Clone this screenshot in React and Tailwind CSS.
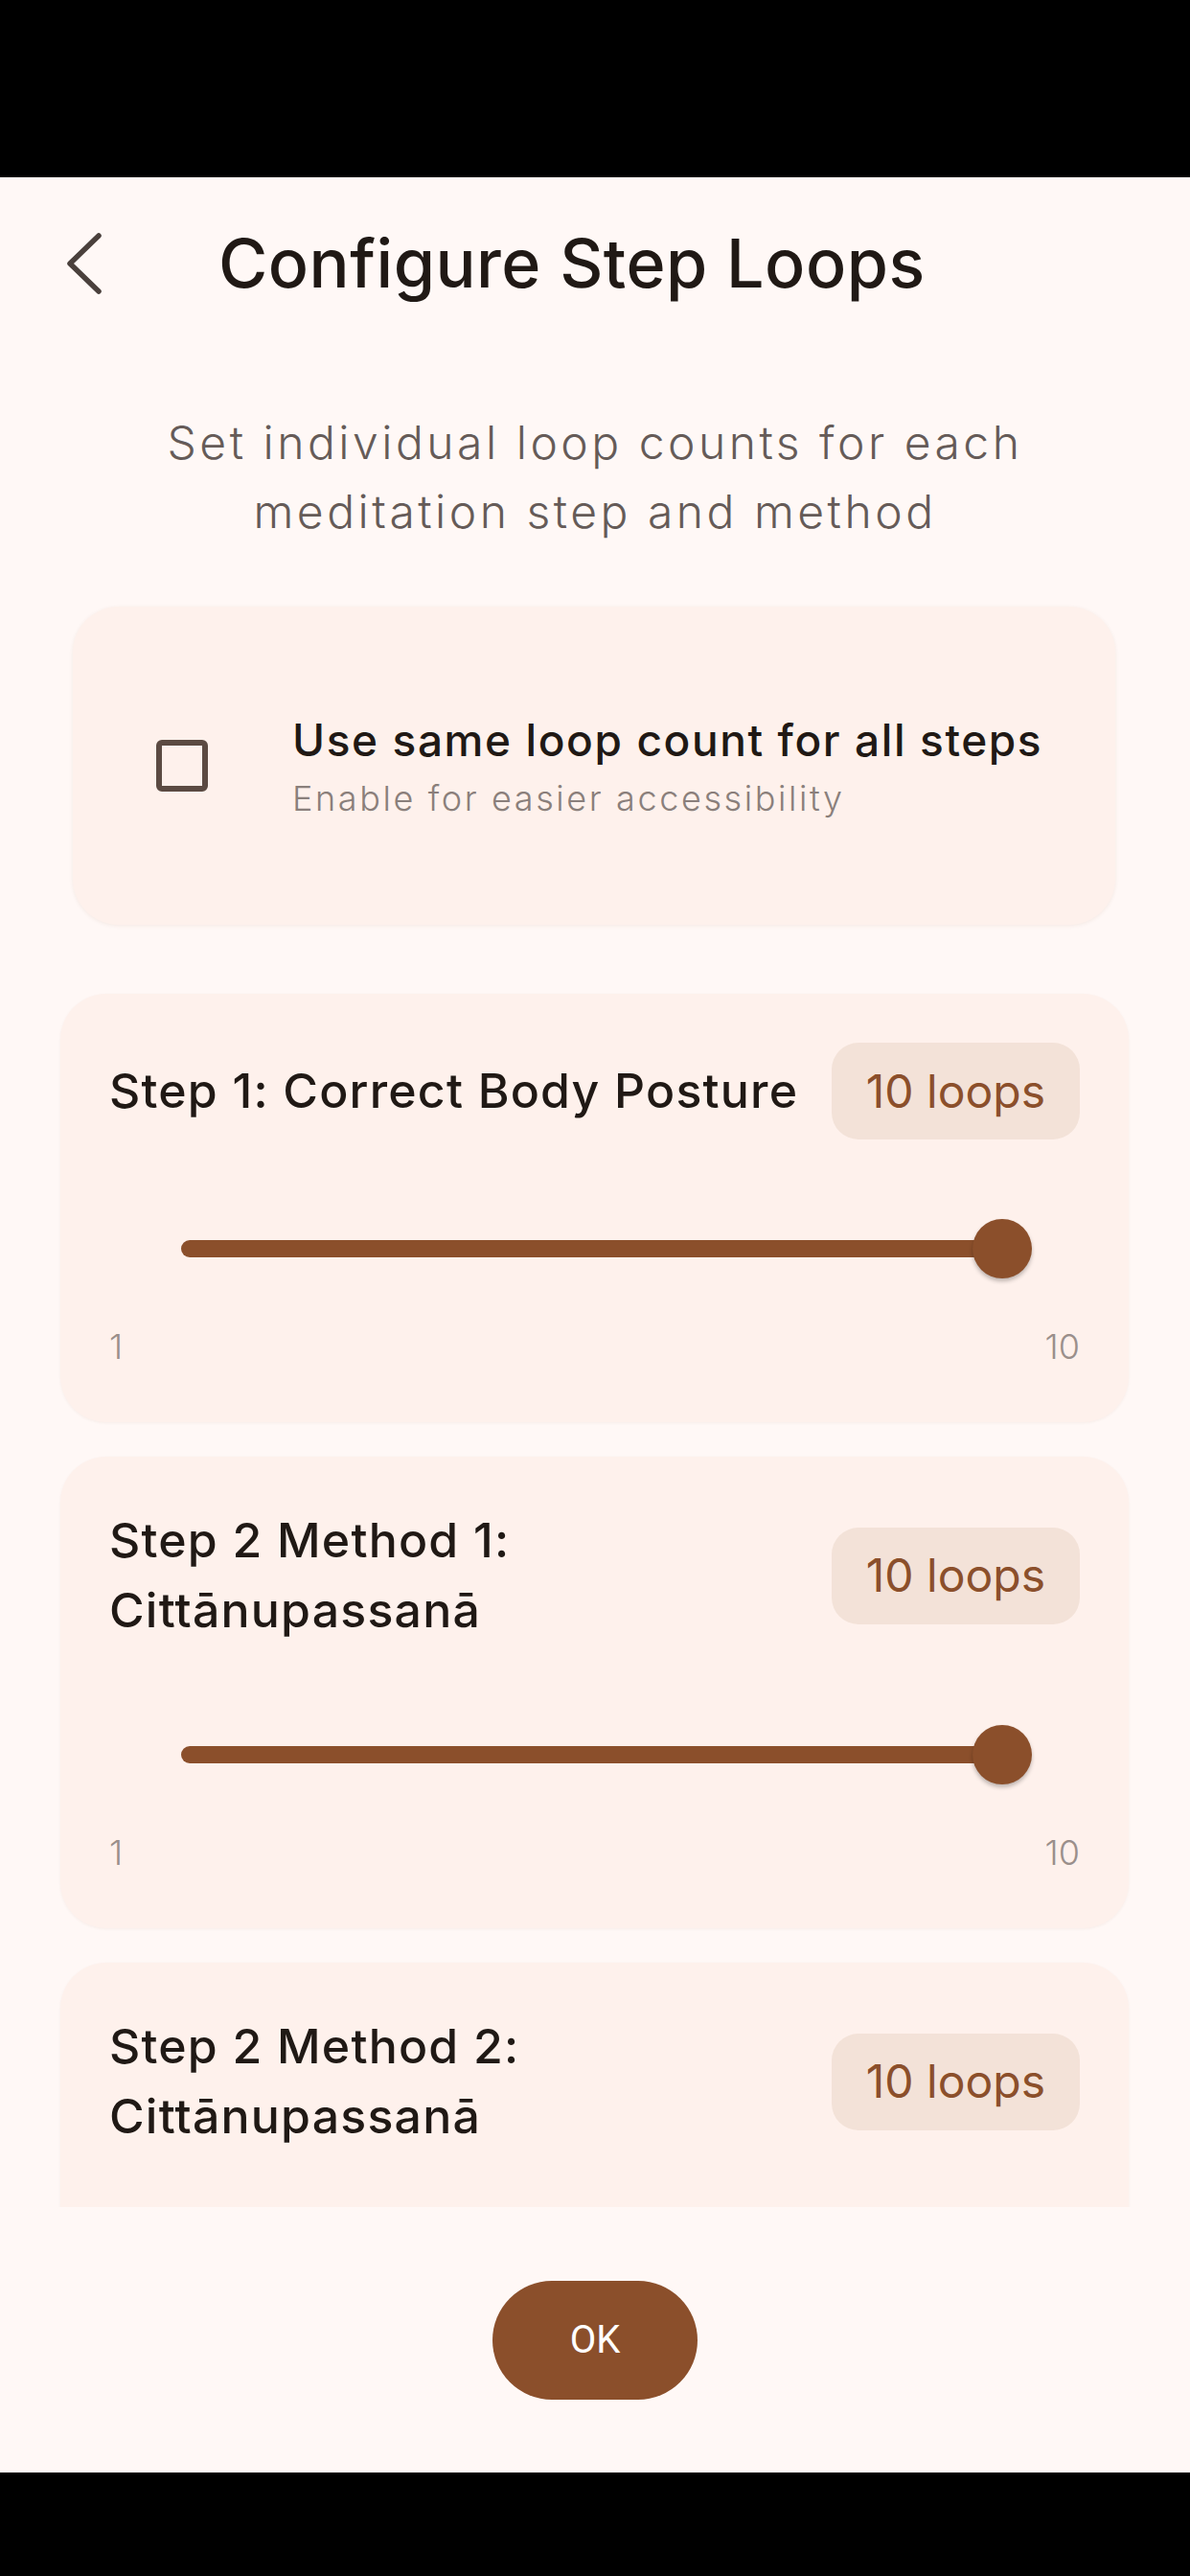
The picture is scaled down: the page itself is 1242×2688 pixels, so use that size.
import React from "react";

const FONT = { fontFamily: "Inter, 'Noto Sans', sans-serif" };

function Slider() {
  return (
    <div className="mx-[75px] mt-[83px] h-[62px] relative">
      <div className="absolute left-0 right-0 top-[22px] h-[18px] rounded-full bg-[#8B4F2B]" />
      <div className="absolute right-[-25px] top-0 w-[62px] h-[62px] rounded-full bg-[#8B4F2B] shadow-[0_3px_4px_rgba(0,0,0,0.25)]" />
    </div>
  );
}

function StepCard({ title, partial }) {
  return (
    <div className="w-[1115px] ml-[63px] rounded-[48px] bg-[#FEF1EC] shadow-[0_1px_3px_rgba(120,60,30,0.06)] px-[51px] pt-[51px] pb-[51px]">
      <div className="flex items-center justify-between gap-[24px]">
        <div className="flex-1 text-[50px] leading-[73px] font-medium tracking-[1.2px] text-[#201915]">{title}</div>
        <div className="h-[101px] px-[36px] rounded-[28px] bg-[#F3E2D8] flex items-center text-[48px] text-[#8B4F2B] whitespace-nowrap">
          10 loops
        </div>
      </div>
      {partial ? (
        <div className="h-[260px]" />
      ) : (
        <>
          <Slider />
          <div className="mt-[43px] flex justify-between text-[36px] leading-[56px] font-light text-[#9A8F8B]">
            <span>1</span>
            <span>10</span>
          </div>
        </>
      )}
    </div>
  );
}

export default function App() {
  return (
    <div className="w-[1242px] h-[2688px] flex flex-col bg-[#FFF8F6] overflow-hidden" style={FONT}>
      <div className="h-[185px] bg-black shrink-0" />
      <div className="h-[180px] shrink-0 flex items-center">
        <div className="w-[228px] pl-[68px] flex items-center">
          <svg width="42" height="64" viewBox="0 0 42 64" fill="none">
            <polyline points="35,3 5,32 35,61" stroke="#4A403C" strokeWidth="5.5" strokeLinecap="round" strokeLinejoin="round" />
          </svg>
        </div>
        <div className="text-[70px] font-medium tracking-[0.5px] text-[#201915] leading-none">Configure Step Loops</div>
      </div>
      <div className="h-[1938px] shrink-0 overflow-hidden">
        <p className="mt-[61px] px-[150px] text-center text-[48px] leading-[72px] font-light tracking-[3.5px] text-[#655B58]">
          Set individual loop counts for each meditation step and method
        </p>
        <div className="mt-[63px] ml-[76px] w-[1088px] h-[332px] rounded-[48px] bg-[#FEF1EC] shadow-[0_1px_4px_rgba(120,60,30,0.08)] flex items-center pl-[87px]">
          <div className="w-[54px] h-[54px] rounded-[6px] border-[6px] border-[#5B4A42] shrink-0" />
          <div className="ml-[88px]">
            <div className="text-[46px] leading-[68px] font-medium tracking-[1.6px] text-[#201915]">Use same loop count for all steps</div>
            <div className="text-[36px] leading-[54px] font-light tracking-[2.6px] text-[#8A7F7B]">Enable for easier accessibility</div>
          </div>
        </div>
        <div className="mt-[72px] flex flex-col gap-[36px]">
          <StepCard title="Step 1: Correct Body Posture" />
          <StepCard title="Step 2 Method 1: Cittānupassanā" />
          <StepCard title="Step 2 Method 2: Cittānupassanā" partial />
        </div>
      </div>
      <div className="flex-1 flex items-center justify-center">
        <button className="w-[214px] h-[124px] rounded-full bg-[#8B4F2B] text-white text-[40px]" style={{ fontFamily: "Roboto, sans-serif" }}>
          OK
        </button>
      </div>
      <div className="h-[108px] bg-black shrink-0" />
    </div>
  );
}
